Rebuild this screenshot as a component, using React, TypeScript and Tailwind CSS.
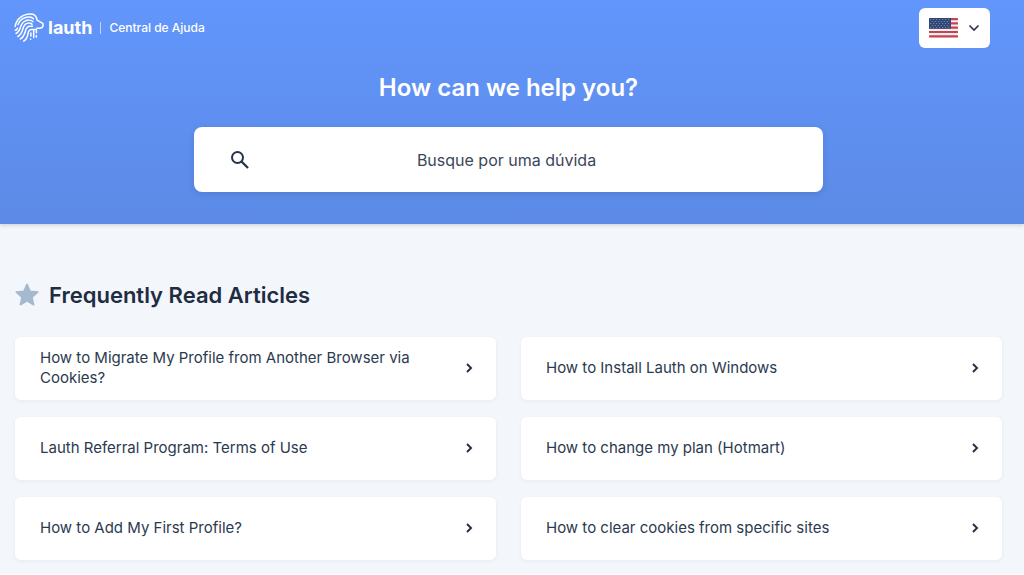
import { useState } from 'react';

interface Article {
  title: string;
  slug: string;
}

const articles: Article[] = [
  { title: 'How to Migrate My Profile from Another Browser via Cookies?', slug: 'migrate-profile' },
  { title: 'How to Install Lauth on Windows', slug: 'install-windows' },
  { title: 'Lauth Referral Program: Terms of Use', slug: 'referral-program' },
  { title: 'How to change my plan (Hotmart)', slug: 'change-plan' },
  { title: 'How to Add My First Profile?', slug: 'first-profile' },
  { title: 'How to clear cookies from specific sites', slug: 'clear-cookies' },
];

const flagStripes = [0, 4.3, 8.6, 12.9, 17.2];
const starRows = [1.5, 3.5, 5.5, 7.5, 9.5];

function LionMark() {
  return (
    <svg
      className="size-[30px] shrink-0"
      viewBox="0 0 30 30"
      fill="none"
      stroke="currentColor"
      strokeWidth="1.5"
      strokeLinecap="round"
      strokeLinejoin="round"
      aria-hidden="true"
    >
      <path d="M1.2 13.5C2.2 6 9 .9 16.5 1c3.2 0 5 1.3 6 3.8l.6 2.4 5.2 3c.9.7 1.1 1.5.7 2.6-.5 1.7-1.6 2.4-3.2 2.5h-3" />
      <path d="M4 11.5C5.7 6.9 10.3 3.8 15.3 4c1.8.1 3.1.6 4.2 1.7" />
      <path d="M1.2 17.3c1 0 1.800-.8 2.200-2" />
      <path d="M2 20.5c2.900-1.200 3.400-3.300 4.200-5.700C7.500 10.200 11 6.900 15.200 7c1.600 0 2.700.6 3.600 1.600" />
      <path d="M3.8 23.500c3.700-2 4.200-4.800 5-7.500 1.100-3.800 3.400-6 6.400-5.900 1.200 0 2.100.4 2.800 1.100" />
      <path d="M6.3 26c3.900-2.200 4.400-5.600 5.300-8.600.8-2.700 2-4.100 4.400-4.200h2.500" />
      <path d="M9.7 28.200c3.200-2 3.900-5 4.400-8.100.4-2.400 1.500-3.600 3.600-3.700h4.700v3.400" />
      <path d="M16.9 20v3M16.600 26v.3M19.700 17v7.500M22.400 22.500v1.500" />
    </svg>
  );
}

function UsFlag() {
  return (
    <svg className="h-5 w-[29px]" viewBox="0 0 29 20" aria-hidden="true">
      <rect width="29" height="19.4" rx=".8" fill="#eef0f4" />
      {flagStripes.map((y) => (
        <rect key={y} y={y} width="29" height="2.2" rx=".4" fill="#c9424f" />
      ))}
      <rect width="22" height="10.8" rx=".5" fill="#2f4677" />
      {starRows.map((y, i) => (
        <path
          key={y}
          d={`M${i % 2 ? 2.8 : 1.3} ${y}H21`}
          stroke="#a9b6cf"
          strokeWidth=".8"
          strokeDasharray=".8 2.2"
        />
      ))}
    </svg>
  );
}

function ArticleCard({ article }: { article: Article }) {
  return (
    <a
      href={`#${article.slug}`}
      className="flex min-h-[63px] items-center justify-between gap-12 rounded-md bg-white pt-2 pr-5 pb-2.5 pl-[25px] text-[15px] leading-5 text-[#2b3a4e] shadow-[0_1px_4px_rgba(30,50,80,0.06)]"
    >
      <span>{article.title}</span>
      <svg className="size-3.5 shrink-0 text-[#253347]" viewBox="0 0 14 14" fill="none" aria-hidden="true">
        <path d="M5 3l4 4-4 4" stroke="currentColor" strokeWidth="2" />
      </svg>
    </a>
  );
}

export default function App() {
  const [query, setQuery] = useState('');

  return (
    <div className="bg-[#f3f6fb] font-['Inter',sans-serif]">
      <header className="bg-linear-to-b from-[#6296fc] to-[#5c8ae6] pb-8 text-white shadow-[0_1px_4px_rgba(30,50,80,0.2)]">
        <div className="flex items-start justify-between pt-2 pr-[34px] pl-3.5">
          <a href="#home" className="flex h-10 items-center">
            <LionMark />
            <span className="ml-1 text-lg font-bold">lauth</span>
            <span className="ml-2 h-3 w-px bg-white/60" />
            <span className="ml-2 text-xs font-medium">Central de Ajuda</span>
          </a>
          <button
            type="button"
            aria-label="Language"
            className="flex h-10 items-center gap-2.5 rounded-md bg-white px-2.5 text-[#253347]"
          >
            <UsFlag />
            <svg className="size-3" viewBox="0 0 12 12" fill="none" aria-hidden="true">
              <path d="M1.5 3.5L6 8l4.5-4.500" stroke="currentColor" strokeWidth="1.6" />
            </svg>
          </button>
        </div>

        <div className="pr-[22px] pl-[15px]">
          <h1 className="mt-6 text-center text-2xl leading-8 font-semibold">How can we help you?</h1>
          <form
            className="mx-auto mt-[23px] flex h-[65px] max-w-[629px] items-center rounded-lg bg-white px-9 shadow-[0_2px_6px_rgba(30,50,80,0.15)]"
            onSubmit={(e) => e.preventDefault()}
          >
            <svg className="size-5 shrink-0 text-[#253347]" viewBox="0 0 20 20" fill="none" aria-hidden="true">
              <circle cx="7.5" cy="7.5" r="5.5" stroke="currentColor" strokeWidth="2" />
              <path d="M11.5 11.5l6.5 6.5" stroke="currentColor" strokeWidth="2.3" />
            </svg>
            <input
              type="text"
              aria-label="Busque por uma dúvida"
              placeholder="Busque por uma dúvida"
              value={query}
              onChange={(e) => setQuery(e.target.value)}
              className="mr-6 min-w-0 flex-1 text-center text-base text-[#253347] outline-none placeholder:text-[#3a475a]"
            />
          </form>
        </div>
      </header>

      <main className="pt-[55px] pr-[22px] pb-3.5 pl-[15px]">
        <h2 className="flex items-center gap-2.5 text-[22px] leading-8 font-semibold text-[#1f2d42]">
          <svg className="size-6 text-[#a5b9cf]" viewBox="0 0 24 24" aria-hidden="true">
            <path
              d="M12 1.3l3.1 7 7.6.8-5.7 5.1 1.6 7.5L12 17.9l-6.6 3.8L7 14.2 1.3 9.1l7.6-.8z"
              fill="currentColor"
              stroke="currentColor"
              strokeWidth="1.6"
              strokeLinejoin="round"
            />
          </svg>
          Frequently Read Articles
        </h2>
        <div className="mt-[26px] grid grid-cols-2 gap-x-[25px] gap-y-[17px]">
          {articles.map((article) => (
            <ArticleCard key={article.slug} article={article} />
          ))}
        </div>
      </main>
    </div>
  );
}
